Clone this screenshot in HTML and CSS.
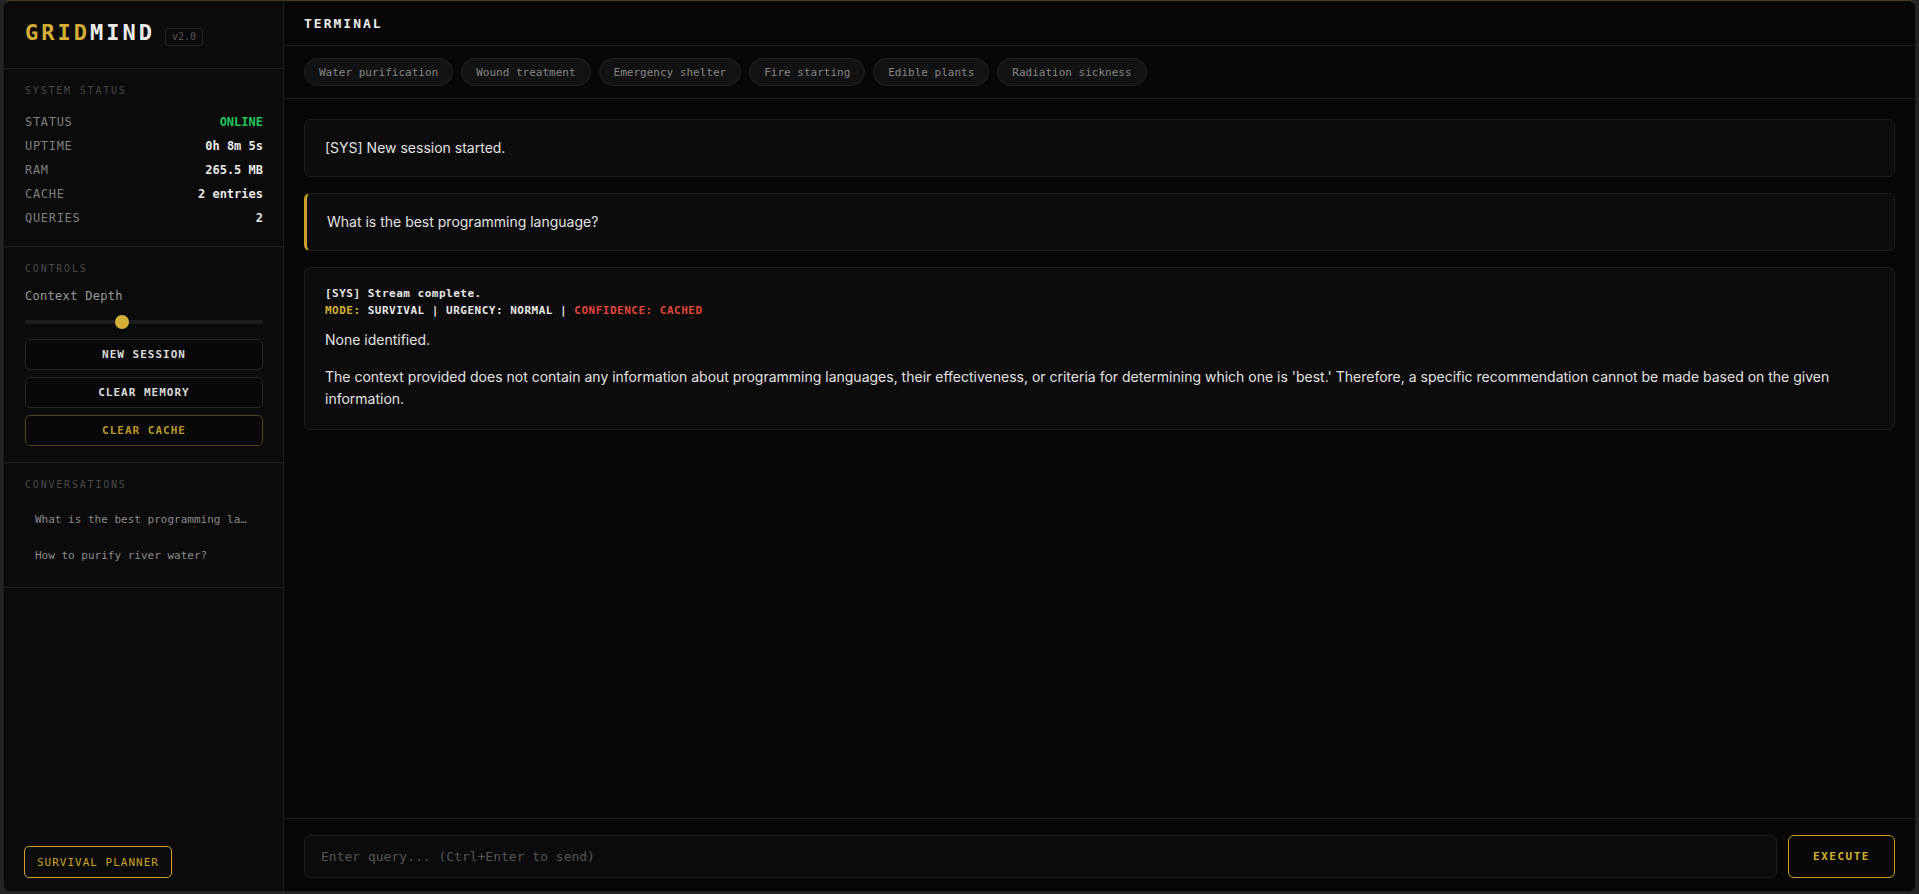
FILE: index.html
```html
<!DOCTYPE html>
<html lang="en">
<head>
<meta charset="utf-8">
<title>GridMind Terminal</title>
<link rel="stylesheet" href="styles.css">
</head>
<body>
<div class="app">
  <aside class="sidebar">
    <div class="brand">
      <span class="logo"><span class="logo-gold">GRID</span><span class="logo-white">MIND</span></span>
      <span class="ver">v2.0</span>
    </div>

    <section class="panel">
      <h3 class="panel-title">SYSTEM STATUS</h3>
      <div class="stat"><span class="stat-label">STATUS</span><span class="stat-value online">ONLINE</span></div>
      <div class="stat"><span class="stat-label">UPTIME</span><span class="stat-value">0h 8m 5s</span></div>
      <div class="stat"><span class="stat-label">RAM</span><span class="stat-value">265.5 MB</span></div>
      <div class="stat"><span class="stat-label">CACHE</span><span class="stat-value">2 entries</span></div>
      <div class="stat"><span class="stat-label">QUERIES</span><span class="stat-value">2</span></div>
    </section>

    <section class="panel">
      <h3 class="panel-title">CONTROLS</h3>
      <label class="depth-label" for="depth">Context Depth</label>
      <input class="depth" id="depth" type="range" min="1" max="11" value="5">
      <div class="ctrl-buttons">
        <button class="ctrl-btn">NEW SESSION</button>
        <button class="ctrl-btn">CLEAR MEMORY</button>
        <button class="ctrl-btn ctrl-warn">CLEAR CACHE</button>
      </div>
    </section>

    <section class="panel panel-convs">
      <h3 class="panel-title conv-title">CONVERSATIONS</h3>
      <div class="conv">What is the best programming language?</div>
      <div class="conv">How to purify river water?</div>
    </section>

    <div class="side-foot">
      <button class="planner-btn">SURVIVAL PLANNER</button>
    </div>
  </aside>

  <main class="main">
    <header class="term-head">TERMINAL</header>

    <div class="chips">
      <button class="chip">Water purification</button>
      <button class="chip">Wound treatment</button>
      <button class="chip">Emergency shelter</button>
      <button class="chip">Fire starting</button>
      <button class="chip">Edible plants</button>
      <button class="chip">Radiation sickness</button>
    </div>

    <div class="messages">
      <div class="msg msg-sys">[SYS] New session started.</div>
      <div class="msg msg-user">What is the best programming language?</div>
      <div class="msg msg-bot">
        <div class="meta">
          <div class="meta-line">[SYS] Stream complete.</div>
          <div class="meta-line"><span class="k-gold">MODE:</span> SURVIVAL | URGENCY: NORMAL | <span class="k-red">CONFIDENCE: CACHED</span></div>
        </div>
        <p class="answer">None identified.</p>
        <p class="answer">The context provided does not contain any information about programming languages, their effectiveness, or criteria for determining which one is 'best.' Therefore, a specific recommendation cannot be made based on the given information.</p>
      </div>
    </div>

    <div class="composer">
      <input class="query" type="text" placeholder="Enter query... (Ctrl+Enter to send)">
      <button class="exec-btn">EXECUTE</button>
    </div>
  </main>
</div>
</body>
</html>
```

FILE: styles.css
```css
* { box-sizing: border-box; }

html, body {
  margin: 0;
  height: 894px;
  overflow: hidden;
  background: #242424;
}

body {
  font-family: "DejaVu Sans Mono", "Liberation Mono", monospace;
  color: #e0e0e0;
}

.app {
  margin: 0 3px;
  height: 892px;
  display: flex;
  border: 1px solid #1d1d1d;
  border-top-color: #4a3d14;
  border-radius: 8px;
  overflow: hidden;
  background: #060606;
}

/* ---------- Sidebar ---------- */
.sidebar {
  width: 280px;
  flex: none;
  display: flex;
  flex-direction: column;
  background: #0b0b0b;
  border-right: 1px solid #1f1f1f;
}

.brand {
  height: 68px;
  padding: 19px 20px 0 21px;
  display: flex;
  align-items: baseline;
  border-bottom: 1px solid #1f1f1f;
}

.logo {
  font-size: 22px;
  font-weight: bold;
  letter-spacing: 3px;
  line-height: 1.2;
}
.logo-gold { color: #d4af37; }
.logo-white { color: #ececec; }

.ver {
  margin-left: 10px;
  font-size: 10px;
  line-height: 12px;
  color: #555;
  padding: 2px 6px;
  border: 1px solid #242424;
  border-radius: 3px;
}

.panel {
  padding: 16px 20px 16px 21px;
  border-bottom: 1px solid #1f1f1f;
}

.panel-title {
  margin: 0 0 13px;
  font-size: 10px;
  line-height: 12px;
  font-weight: normal;
  letter-spacing: 1.8px;
  color: #4a4a4a;
}

.stat {
  display: flex;
  justify-content: space-between;
  height: 24px;
  line-height: 24px;
  font-size: 12px;
}
.stat-label { color: #7f7f7f; letter-spacing: 0.7px; }
.stat-value { color: #e8e8e8; font-weight: bold; }
.stat-value.online { color: #22c55e; }

.depth-label {
  display: block;
  font-size: 12px;
  line-height: 16px;
  color: #9a9a9a;
  letter-spacing: 0.3px;
  margin-top: 0;
}

.depth {
  -webkit-appearance: none;
  appearance: none;
  display: block;
  width: 100%;
  height: 14px;
  margin: 11px 0 10px;
  background: transparent;
}
.depth::-webkit-slider-runnable-track {
  height: 4px;
  background: #1e1e1e;
  border-radius: 2px;
}
.depth::-webkit-slider-thumb {
  -webkit-appearance: none;
  appearance: none;
  width: 14px;
  height: 14px;
  margin-top: -5px;
  border: none;
  border-radius: 50%;
  background: #d4af37;
}

.ctrl-buttons {
  display: flex;
  flex-direction: column;
  gap: 7px;
}

.ctrl-btn {
  height: 31px;
  background: #080808;
  border: 1px solid #262626;
  border-radius: 5px;
  color: #dcdcdc;
  font-family: inherit;
  font-size: 11px;
  font-weight: bold;
  letter-spacing: 1px;
}
.ctrl-warn {
  color: #b8962e;
  border-color: #4f4017;
}

.panel-convs { padding-bottom: 13px; }
.conv-title { margin-bottom: 11px; }

.conv {
  padding: 11px 10px;
  font-size: 11px;
  line-height: 14px;
  color: #8a8a8a;
  white-space: nowrap;
  overflow: hidden;
  text-overflow: ellipsis;
}

.side-foot {
  margin-top: auto;
  padding: 0 20px 13px;
}

.planner-btn {
  height: 32px;
  padding: 0 12px;
  background: transparent;
  border: 1px solid #c9a227;
  border-radius: 5px;
  color: #c9a227;
  font-family: inherit;
  font-size: 11px;
  letter-spacing: 1px;
}

/* ---------- Main ---------- */
.main {
  flex: 1;
  min-width: 0;
  display: flex;
  flex-direction: column;
  background: #060606;
}

.term-head {
  height: 45px;
  padding: 0 20px;
  display: flex;
  align-items: center;
  border-bottom: 1px solid #1f1f1f;
  font-size: 13px;
  font-weight: bold;
  letter-spacing: 2px;
  color: #ececec;
}

.chips {
  display: flex;
  gap: 8px;
  padding: 12px 20px;
  border-bottom: 1px solid #1f1f1f;
}

.chip {
  height: 28px;
  padding: 0 14px;
  background: #121212;
  border: 1px solid #242424;
  border-radius: 14px;
  color: #858585;
  font-family: inherit;
  font-size: 11px;
}

.messages {
  flex: 1;
  display: flex;
  flex-direction: column;
  gap: 16px;
  padding: 20px;
  font-family: Inter, "Noto Sans", sans-serif;
}

.msg {
  background: #0c0c0c;
  border: 1px solid #1c1c1c;
  border-radius: 6px;
  padding: 18px 20px;
  font-size: 14px;
  line-height: 20px;
  color: #e2e2e2;
}

.msg-user {
  border-left: 3px solid #c9a227;
}

.meta {
  font-family: "DejaVu Sans Mono", "Liberation Mono", monospace;
  font-size: 11px;
  line-height: 16.5px;
  font-weight: bold;
  letter-spacing: 0.5px;
  color: #e6e6e6;
  margin-bottom: 10px;
}
.k-gold { color: #d4af37; }
.k-red { color: #e0453a; }

.answer {
  margin: 0;
  line-height: 22.5px;
}
.answer + .answer { margin-top: 14px; }

.composer {
  display: flex;
  gap: 11px;
  padding: 16px 20px 13px;
  border-top: 1px solid #1f1f1f;
}

.query {
  flex: 1;
  height: 43px;
  padding: 0 16px;
  background: #0b0b0b;
  border: 1px solid #1e1e1e;
  border-radius: 6px;
  color: #e0e0e0;
  font-family: inherit;
  font-size: 13px;
  outline: none;
}
.query::placeholder { color: #555; }

.exec-btn {
  width: 107px;
  height: 43px;
  background: #080808;
  border: 1px solid #c9a227;
  border-radius: 6px;
  color: #d4af37;
  font-family: inherit;
  font-size: 11px;
  font-weight: bold;
  letter-spacing: 1.5px;
}
```
